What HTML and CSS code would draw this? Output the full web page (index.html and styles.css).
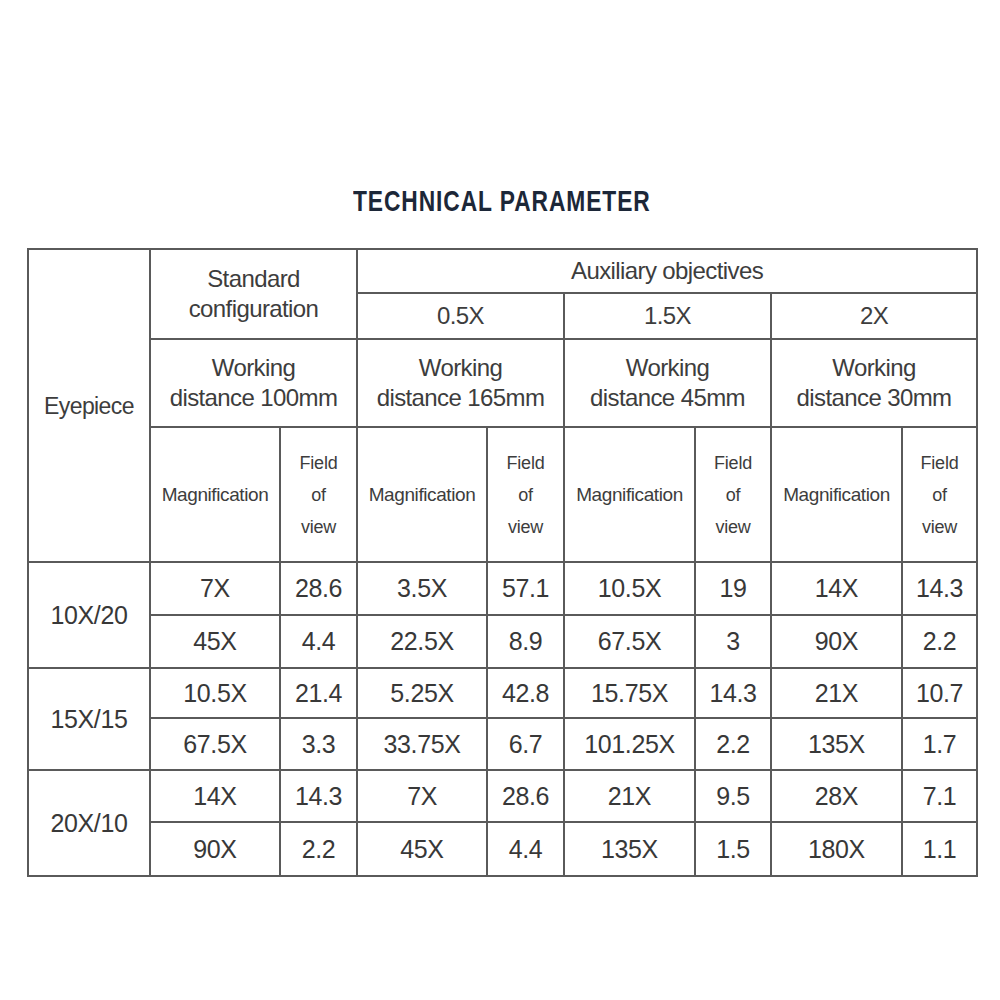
FILE: index.html
```html
<!DOCTYPE html>
<html lang="en">
<head>
<meta charset="utf-8">
<title>Technical Parameter</title>
<link rel="stylesheet" href="styles.css">
</head>
<body>
<div class="page">
  <h1 class="title"><span class="title-text">TECHNICAL PARAMETER</span></h1>
  <table class="spec">
    <colgroup>
      <col class="c-eye">
      <col class="c-mag"><col class="c-fov">
      <col class="c-mag"><col class="c-fov">
      <col class="c-mag2"><col class="c-fov2">
      <col class="c-mag2"><col class="c-fov3">
    </colgroup>
    <thead>
      <tr class="r-aux">
        <th rowspan="4" class="eye">Eyepiece</th>
        <th colspan="2" rowspan="2" class="hd">Standard<br>configuration</th>
        <th colspan="6" class="hd">Auxiliary objectives</th>
      </tr>
      <tr class="r-obj">
        <th colspan="2" class="hd">0.5X</th>
        <th colspan="2" class="hd">1.5X</th>
        <th colspan="2" class="hd">2X</th>
      </tr>
      <tr class="r-wd">
        <th colspan="2" class="hd">Working<br>distance 100mm</th>
        <th colspan="2" class="hd">Working<br>distance 165mm</th>
        <th colspan="2" class="hd">Working<br>distance 45mm</th>
        <th colspan="2" class="hd">Working<br>distance 30mm</th>
      </tr>
      <tr class="r-sub">
        <th class="sub">Magnification</th><th class="sub fov">Field<br>of<br>view</th>
        <th class="sub">Magnification</th><th class="sub fov">Field<br>of<br>view</th>
        <th class="sub">Magnification</th><th class="sub fov">Field<br>of<br>view</th>
        <th class="sub">Magnification</th><th class="sub fov">Field<br>of<br>view</th>
      </tr>
    </thead>
    <tbody>
      <tr class="r1">
        <td rowspan="2" class="eyev">10X/20</td>
        <td>7X</td><td>28.6</td><td>3.5X</td><td>57.1</td><td>10.5X</td><td>19</td><td>14X</td><td>14.3</td>
      </tr>
      <tr class="r2">
        <td>45X</td><td>4.4</td><td>22.5X</td><td>8.9</td><td>67.5X</td><td>3</td><td>90X</td><td>2.2</td>
      </tr>
      <tr class="r3">
        <td rowspan="2" class="eyev">15X/15</td>
        <td>10.5X</td><td>21.4</td><td>5.25X</td><td>42.8</td><td>15.75X</td><td>14.3</td><td>21X</td><td>10.7</td>
      </tr>
      <tr class="r4">
        <td>67.5X</td><td>3.3</td><td>33.75X</td><td>6.7</td><td>101.25X</td><td>2.2</td><td>135X</td><td>1.7</td>
      </tr>
      <tr class="r5">
        <td rowspan="2" class="eyev">20X/10</td>
        <td>14X</td><td>14.3</td><td>7X</td><td>28.6</td><td>21X</td><td>9.5</td><td>28X</td><td>7.1</td>
      </tr>
      <tr class="r6">
        <td>90X</td><td>2.2</td><td>45X</td><td>4.4</td><td>135X</td><td>1.5</td><td>180X</td><td>1.1</td>
      </tr>
    </tbody>
  </table>
</div>
</body>
</html>
```
FILE: styles.css
```css
html, body {
  margin: 0;
  padding: 0;
  background: #ffffff;
}

.page {
  padding-top: 186px;
  font-family: "Liberation Sans", Arial, sans-serif;
  color: #3d3d3d;
}

.title {
  margin: 0 0 32px 0;
  text-align: center;
  font-size: 30px;
  line-height: 30px;
  font-weight: bold;
  color: #1c2738;
  padding-left: 3px;
}

.title-text {
  display: inline-block;
  transform: scaleX(0.76);
  letter-spacing: 1.2px;
}

.spec {
  margin-left: 27px;
  width: 949px;
  table-layout: fixed;
  border-collapse: collapse;
}

.c-eye { width: 122px; }
.c-mag { width: 130px; }
.c-fov { width: 77px; }
.c-mag2 { width: 131px; }
.c-fov2 { width: 76px; }
.c-fov3 { width: 75px; }

.spec th,
.spec td {
  border: 2px solid #5a5a5a;
  padding: 0;
  text-align: center;
  vertical-align: middle;
  font-weight: normal;
  white-space: nowrap;
}

.hd,
.eye {
  font-size: 24px;
  line-height: 30px;
  letter-spacing: -0.6px;
}

.eye { font-size: 23px; }

.sub {
  font-size: 19px;
  letter-spacing: -0.4px;
  line-height: 32px;
}

.fov {
  font-size: 18px;
  letter-spacing: -0.2px;
}

.spec td {
  font-size: 25px;
  letter-spacing: -0.4px;
  color: #383838;
}

.r-aux { height: 44px; }
.r-obj { height: 46px; }
.r-wd { height: 88px; }
.r-sub { height: 135px; }
.r1 { height: 53px; }
.r2 { height: 53px; }
.r3 { height: 50px; }
.r4 { height: 52px; }
.r5 { height: 52px; }
.r6 { height: 54px; }
```
